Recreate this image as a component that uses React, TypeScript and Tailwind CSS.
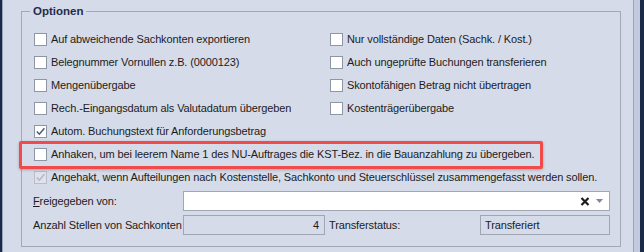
import clsx from 'clsx';

type CheckProps = { checked?: boolean; disabled?: boolean };

const Check = ({ checked, disabled }: CheckProps) => (
  <span
    className={clsx(
      'w-[13px] h-[13px] border flex items-center justify-center shrink-0',
      disabled ? 'border-[#b9bdc8] bg-[#dfe2eb]' : 'border-[#8e95a5] bg-white'
    )}
  >
    {checked && (
      <svg width="11" height="11" viewBox="0 0 11 11">
        <path
          d="M1.8 5.6 L4.3 8.2 L9.4 2.2"
          fill="none"
          stroke={disabled ? '#b3b8c3' : '#4c5877'}
          strokeWidth="1.5"
        />
      </svg>
    )}
  </span>
);

const Option = ({ label, checked, disabled }: CheckProps & { label: string }) => (
  <label className="h-[23px] flex items-center gap-[4px] whitespace-nowrap">
    <Check checked={checked} disabled={disabled} />
    <span>{label}</span>
  </label>
);

const left = [
  'Auf abweichende Sachkonten exportieren',
  'Belegnummer Vornullen z.B. (0000123)',
  'Mengenübergabe',
  'Rech.-Eingangsdatum als Valutadatum übergeben',
];

const right = [
  'Nur vollständige Daten (Sachk. / Kost.)',
  'Auch ungeprüfte Buchungen transferieren',
  'Skontofähigen Betrag nicht übertragen',
  'Kostenträgerübergabe',
];

export default function App() {
  return (
    <div className="relative w-[644px] h-[252px] flex overflow-hidden bg-[#d6dbe9] text-[11px] tracking-[-0.12px] text-[#1c1c1c] font-['Liberation_Sans',Arial,sans-serif]">
      <div className="w-[2px] bg-[#1b2a46]" />
      <div className="w-px bg-[#9aa1b5]" />

      <div className="flex-1 pl-[18px] pr-[12px] pt-[4px]">
        <fieldset className="h-[243px] border border-[#a3a8b6] pl-[12px] pr-[10px]">
          <legend className="-ml-[4px] px-[3px] leading-[14px] text-[11.5px] tracking-normal font-bold text-[#1f2c4c]">
            Optionen
          </legend>

          <div className="pt-[10px]">
            <div className="grid grid-cols-[296px_1fr]">
              <div className="flex flex-col">
                {left.map((l) => (
                  <Option key={l} label={l} />
                ))}
              </div>
              <div className="flex flex-col">
                {right.map((l) => (
                  <Option key={l} label={l} />
                ))}
              </div>
            </div>

            <Option label="Autom. Buchungstext für Anforderungsbetrag" checked />
            <Option label="Anhaken, um bei leerem Name 1 des NU-Auftrages die KST-Bez. in die Bauanzahlung zu übergeben." />
            <Option
              label="Angehakt, wenn Aufteilungen nach Kostenstelle, Sachkonto und Steuerschlüssel zusammengefasst werden sollen."
              checked
              disabled
            />

            <div className="mt-[2px] flex items-center whitespace-nowrap">
              <span className="w-[150px] shrink-0 -ml-px">
                <span className="underline">F</span>reigegeben von:
              </span>
              <div className="flex-1 h-[20px] bg-white border border-[#a0a6b4] flex items-center justify-end pr-[6px] gap-[6px]">
                <svg width="10" height="9" viewBox="0 0 10 9">
                  <path d="M1.5 1 L8.5 8 M8.5 1 L1.5 8" stroke="#1c1c1c" strokeWidth="2.2" />
                </svg>
                <svg width="7" height="4" viewBox="0 0 7 4">
                  <path d="M0 0 H7 L3.5 4 Z" fill="#7f879c" />
                </svg>
              </div>
            </div>

            <div className="mt-[4px] flex items-center whitespace-nowrap">
              <span className="w-[150px] shrink-0 -ml-px">Anzahl Stellen von Sachkonten</span>
              <div className="w-[142px] shrink-0 h-[20px] border border-[#a0a6b4] flex items-center justify-end pr-[5px]">
                4
              </div>
              <span className="ml-[4px]">Transferstatus:</span>
              <div className="ml-auto w-[130px] shrink-0 h-[20px] border border-[#a0a6b4] flex items-center pl-[4px]">
                Transferiert
              </div>
            </div>
          </div>
        </fieldset>
      </div>

      <div className="w-px bg-[#9ea5b8]" />
      <div className="w-[6px] bg-[#c3c9de]" />
      <div className="w-[4px] bg-[#1b2a46]" />

      <div className="absolute left-[19px] top-[141px] w-[524px] h-[28px] border-[3px] border-[#f04a4a] rounded-[2px] shadow-[0_1px_3px_rgba(0,0,0,0.25)]" />
    </div>
  );
}
